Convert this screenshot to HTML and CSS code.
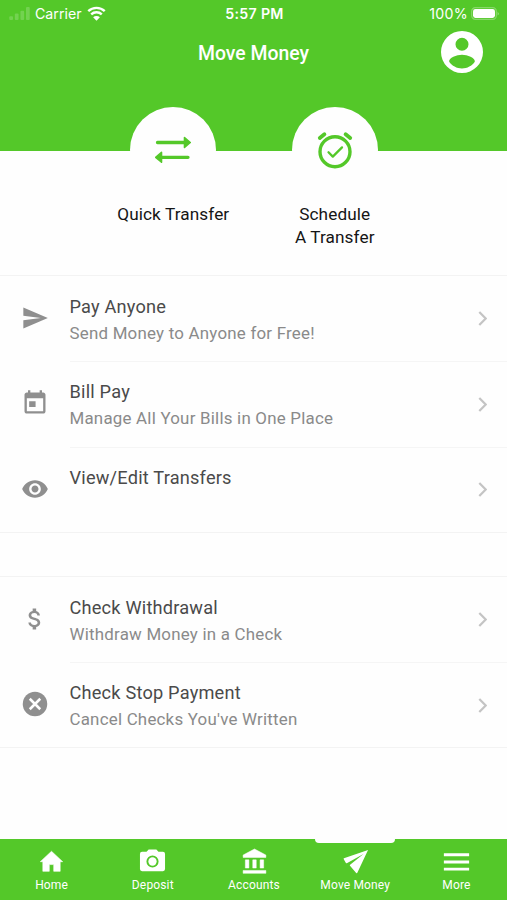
FILE: index.html
```html
<!DOCTYPE html>
<html lang="en">
<head>
    <meta charset="UTF-8">
    <meta name="viewport" content="width=device-width, initial-scale=1.0">
    <title>Move Money</title>
    <link rel="stylesheet" href="styles.css">
</head>
<body>
    <header class="header">
        <div class="status-bar">
            <div class="status-left">
                <svg class="signal" viewBox="0 0 22 14">
                    <rect x="0" y="10" width="4" height="4" rx="1"/>
                    <rect x="6" y="7" width="4" height="7" rx="1"/>
                    <rect x="12" y="4" width="4" height="10" rx="1"/>
                    <rect x="18" y="0" width="4" height="14" rx="1"/>
                </svg>
                <span class="carrier">Carrier</span>
                <svg class="wifi" viewBox="0 0 18 14">
                    <path d="M1.2 4.8a11.3 11.3 0 0 1 15.6 0M4 7.9a7.2 7.2 0 0 1 10 0" fill="none" stroke="#fff" stroke-width="2.3"/>
                    <path d="M5.8 10.6a4.6 4.6 0 0 1 6.4 0L9 13.8z"/>
                </svg>
            </div>
            <div class="clock">5:57 PM</div>
            <div class="status-right">
                <span>100%</span>
                <svg class="battery" viewBox="0 0 29 13">
                    <rect x=".7" y=".7" width="24.6" height="11.6" rx="3.6" fill="none" stroke="#fff" stroke-opacity=".3" stroke-width="1.2"/>
                    <rect x="2" y="2" width="22" height="9" rx="2.4"/>
                    <path d="M26.7 4.5q1.8 2 0 4z" fill-opacity=".5"/>
                </svg>
            </div>
        </div>
        <h1 class="title">Move Money</h1>
        <svg class="avatar" viewBox="2 2 20 20">
            <path d="M12 2a10 10 0 1 0 0 20a10 10 0 1 0 0-20zm0 3.2a3.1 3.1 0 1 1 0 6.2a3.1 3.1 0 1 1 0-6.2zm0 14.600c-2.500 0-4.800-1.300-6.100-3.200c-.3-1.800 3.600-3.300 6.100-3.300s6.400 1.500 6.100 3.300c-1.300 1.900-3.600 3.200-6.100 3.200z"/>
        </svg>
    </header>

    <!-- Quick actions -->
    <section class="actions">
        <a class="action">
            <span class="circle">
                <svg width="36" height="28" viewBox="0 0 36 28" fill="#54c829">
                    <path d="M2.500 6.500h27M7 21.300h26" stroke="#54c829" stroke-width="3.300" stroke-linecap="round"/>
                    <path d="M29.500 1.600l5.800 4.900l-5.800 4.900z M6.500 16.400l-5.800 4.900l5.800 4.900z" stroke="#54c829" stroke-width="1.600" stroke-linejoin="round"/>
                </svg>
            </span>
            <span class="action-label">Quick Transfer</span>
        </a>
        <a class="action">
            <span class="circle">
                <svg width="36" height="38" viewBox="0 0 36 38" fill="none" stroke="#54c829" stroke-linecap="round" stroke-linejoin="round">
                    <circle cx="18" cy="20.700" r="15" stroke-width="3.400"/>
                    <path d="M2.800 7l4.600-3.800M33.200 7l-4.600-3.800" stroke-width="3.800"/>
                    <path d="M11.500 21.300l4.300 4.300l9.200-9.200" stroke-width="2.300"/>
                </svg>
            </span>
            <span class="action-label">Schedule<br>A Transfer</span>
        </a>
    </section>

    <ul class="list">
        <li class="row">
            <span class="row-icon"><svg viewBox="0 0 24 24"><path d="M2 21L23 12L2 3v7l15 2l-15 2z"/></svg></span>
            <div class="row-body">
                <div class="row-text">
                    <div class="row-title">Pay Anyone</div>
                    <div class="row-sub">Send Money to Anyone for Free!</div>
                </div>
                <svg class="chevron" viewBox="0 0 8 14"><path d="M1 1l6 6l-6 6"/></svg>
            </div>
        </li>
        <li class="row">
            <span class="row-icon"><svg viewBox="0 0 24 24"><path d="M19 3h-1V1h-2v2H8V1H6v2H5C3.900 3 3 3.900 3 5v14c0 1.100.9 2 2 2h14c1.100 0 2-.9 2-2V5c0-1.100-.9-2-2-2zm0 16H5V8h14v11zM7 10.500h5.500v5H7z"/></svg></span>
            <div class="row-body">
                <div class="row-text">
                    <div class="row-title">Bill Pay</div>
                    <div class="row-sub">Manage All Your Bills in One Place</div>
                </div>
                <svg class="chevron" viewBox="0 0 8 14"><path d="M1 1l6 6l-6 6"/></svg>
            </div>
        </li>
        <li class="row">
            <span class="row-icon"><svg viewBox="0 0 24 24"><path d="M12 4.500C7 4.500 2.730 7.610 1 12c1.730 4.390 6 7.500 11 7.500s9.270-3.110 11-7.500c-1.730-4.390-6-7.500-11-7.500zM12 17c-2.760 0-5-2.240-5-5s2.240-5 5-5s5 2.240 5 5s-2.240 5-5 5zm0-8c-1.660 0-3 1.340-3 3s1.340 3 3 3s3-1.340 3-3s-1.340-3-3-3z"/></svg></span>
            <div class="row-body">
                <div class="row-text">
                    <div class="row-title">View/Edit Transfers</div>
                </div>
                <svg class="chevron" viewBox="0 0 8 14"><path d="M1 1l6 6l-6 6"/></svg>
            </div>
        </li>
    </ul>

    <ul class="list">
        <li class="row">
            <span class="row-icon"><svg viewBox="0 0 24 24"><path d="M11.800 10.900c-2.270-.59-3-1.200-3-2.150c0-1.090 1.010-1.850 2.700-1.850c1.780 0 2.440.85 2.500 2.100h2.210c-.07-1.720-1.120-3.300-3.210-3.810V3h-3v2.160c-1.940.42-3.500 1.680-3.500 3.610c0 2.310 1.910 3.460 4.700 4.130c2.500.6 3 1.480 3 2.410c0 .69-.49 1.790-2.700 1.790c-2.060 0-2.870-.92-2.980-2.100H6.320c.12 2.190 1.760 3.420 3.680 3.830V21h3v-2.150c1.950-.37 3.500-1.500 3.500-3.550c0-2.840-2.430-3.810-4.700-4.400z"/></svg></span>
            <div class="row-body">
                <div class="row-text">
                    <div class="row-title">Check Withdrawal</div>
                    <div class="row-sub">Withdraw Money in a Check</div>
                </div>
                <svg class="chevron" viewBox="0 0 8 14"><path d="M1 1l6 6l-6 6"/></svg>
            </div>
        </li>
        <li class="row">
            <span class="row-icon"><svg viewBox="0 0 24 24"><circle cx="12" cy="12" r="10.500"/><path d="M7.500 7.500l9 9M16.500 7.500l-9 9" stroke="#fff" stroke-width="2.200"/></svg></span>
            <div class="row-body">
                <div class="row-text">
                    <div class="row-title">Check Stop Payment</div>
                    <div class="row-sub">Cancel Checks You've Written</div>
                </div>
                <svg class="chevron" viewBox="0 0 8 14"><path d="M1 1l6 6l-6 6"/></svg>
            </div>
        </li>
    </ul>

    <nav class="tabs">
        <a class="tab">
            <svg viewBox="0 0 28 28"><path d="M11.700 24.200v-7h4.600v7H23v-10h2.600L14 3.400L2.400 14.200H5v10z" stroke="#fff" stroke-width=".6" stroke-linejoin="round"/></svg>
            <span>Home</span>
        </a>
        <a class="tab">
            <svg viewBox="0 0 28 28"><path fill-rule="evenodd" d="M10 1.500L7.800 4H3.200Q1 4 1 6.200v15.600Q1 24 3.200 24h21.600q2.200 0 2.200-2.200V6.200Q27 4 24.800 4h-4.600L18 1.500zM14 7.700a6.300 6.300 0 1 1 0 12.600a6.300 6.300 0 1 1 0-12.600z"/><circle cx="14" cy="14" r="4.300"/></svg>
            <span>Deposit</span>
        </a>
        <a class="tab">
            <svg viewBox="0 0 28 28"><path d="M14 1L2.200 7.300v2.500h23.600V7.300zM4.500 12.300v8.500h3.700v-8.500zM12.200 12.300v8.500h3.600v-8.500zM19.800 12.300v8.500h3.700v-8.500zM2.200 23.300v3h23.600v-3z" stroke="#fff" stroke-width=".5" stroke-linejoin="round"/></svg>
            <span>Accounts</span>
        </a>
        <a class="tab active">
            <svg viewBox="0 0 28 28"><path d="M27 2.200L2 10.500q-.6.300-.3 1l2.200 3.900q.4.600 1.100.3L22.300 6.300L8.400 17.300q-.6.500-.1 1l6.400 7.600q.7.500 1.200-.3z"/></svg>
            <span>Move Money</span>
        </a>
        <a class="tab">
            <svg viewBox="0 0 28 28"><path d="M.9 7h26.200M.9 14.500h26.200M.9 22h26.200" stroke="#fff" stroke-width="2.900"/></svg>
            <span>More</span>
        </a>
    </nav>
</body>
</html>
```
FILE: styles.css
```css
* {
    box-sizing: border-box;
}

body {
    margin: 0;
    height: 100vh;
    display: flex;
    flex-direction: column;
    overflow: hidden;
    font-family: Roboto, "Liberation Sans", sans-serif;
    background-color: #fefefe;
    color: #151515;
}

svg {
    display: block;
    flex-shrink: 0;
}

.header {
    position: relative;
    flex-shrink: 0;
    height: 151px;
    background-color: #54c829;
    color: #fff;
}

.header svg {
    fill: #fff;
}

.status-bar {
    display: grid;
    grid-template-columns: 1fr auto 1fr;
    align-items: center;
    height: 27px;
    padding: 0 7px 0 9px;
    font-family: Inter, Roboto, sans-serif;
    font-size: 14.2px;
}

.status-left,
.status-right {
    display: flex;
    align-items: center;
}

.status-right {
    justify-content: flex-end;
    gap: 3px;
    letter-spacing: 0.3px;
}

.header .signal {
    width: 21px;
    height: 13px;
    margin-right: 5px;
    opacity: 0.18;
}

.wifi {
    width: 19px;
    height: 15px;
    margin-left: 5px;
}

.battery {
    width: 29px;
    height: 13px;
}

.clock {
    font-weight: 600;
    letter-spacing: 0.3px;
}

.title {
    margin: 13px 0 0;
    font-size: 19.4px;
    font-weight: 500;
    line-height: 28px;
    text-align: center;
}

.avatar {
    position: absolute;
    top: 31px;
    right: 24px;
    width: 42px;
    height: 42px;
}

.actions {
    display: flex;
    justify-content: center;
    flex-shrink: 0;
    height: 168px;
    margin-top: -44px;
    padding-left: 1px;
    position: relative;
}

.action {
    display: flex;
    flex-direction: column;
    align-items: center;
    width: 161.5px;
}

.circle {
    display: flex;
    justify-content: center;
    align-items: center;
    width: 86px;
    height: 86px;
    border-radius: 50%;
    background-color: #fefefe;
}

.action-label {
    margin-top: 10px;
    font-size: 17.2px;
    line-height: 23px;
    letter-spacing: 0.1px;
    text-align: center;
}

.list {
    flex-shrink: 0;
    margin: 0 0 43px;
    padding: 0;
    list-style: none;
    border-top: 1px solid #f3f3f3;
    border-bottom: 1px solid #f3f3f3;
}

.row {
    display: flex;
    height: 85.3px;
}

.row-icon {
    display: flex;
    justify-content: center;
    align-items: center;
    width: 69.5px;
    padding-bottom: 1px;
}

.row-icon svg {
    width: 28px;
    height: 28px;
    fill: #8f8f8f;
}

.row-body {
    display: flex;
    flex: 1;
    justify-content: space-between;
    align-items: center;
    padding-right: 20px;
}

.row + .row .row-body {
    border-top: 1px solid #f5f5f5;
}

.row-text {
    align-self: flex-start;
    padding-top: 18px;
}

/* keeps the text in line with the rows that have no divider */
.row + .row .row-text {
    padding-top: 17px;
}

.row-title {
    font-size: 18.2px;
    line-height: 26px;
    letter-spacing: 0.2px;
    color: #4a4a4a;
}

.row-sub {
    font-size: 16.9px;
    line-height: 26px;
    letter-spacing: 0.22px;
    color: #8a8a8a;
}

.chevron {
    width: 9px;
    height: 15px;
    fill: none;
    stroke: #c4c4c4;
    stroke-width: 2.1;
}

.tabs {
    display: flex;
    flex-shrink: 0;
    height: 61px;
    margin-top: auto;
    padding-left: 1px;
    background-color: #54c829;
    color: #fff;
}

.tab {
    position: relative;
    display: flex;
    flex: 1;
    flex-direction: column;
    align-items: center;
    padding-top: 9px;
    font-size: 12px;
    line-height: 16px;
    letter-spacing: 0.15px;
    white-space: nowrap;
}

.tab svg {
    width: 27px;
    height: 27px;
    margin-bottom: 2px;
    fill: #fff;
}

.tab.active::before {
    content: "";
    position: absolute;
    top: -1px;
    left: 50%;
    width: 80px;
    height: 5px;
    margin-left: -40px;
    border-radius: 0 0 4px 4px;
    background-color: #fefefe;
}
```
